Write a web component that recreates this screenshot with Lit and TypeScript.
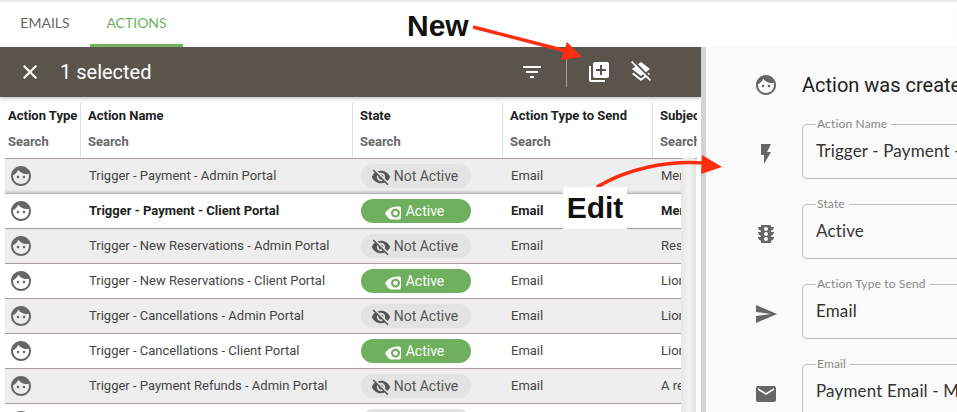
import { LitElement, html, css, svg } from "lit";
import { customElement } from "lit/decorators.js";

const P = {
  face: "M9 11.75c-.69 0-1.25.56-1.25 1.25s.56 1.25 1.25 1.25 1.25-.56 1.25-1.25-.56-1.25-1.25-1.25zm6 0c-.69 0-1.25.56-1.25 1.25s.56 1.25 1.25 1.25 1.25-.56 1.25-1.25-.56-1.25-1.25-1.25zM12 2C6.48 2 2 6.48 2 12s4.48 10 10 10 10-4.48 10-10S17.52 2 12 2zm0 18c-4.41 0-8-3.59-8-8 0-.29.02-.58.05-.86 2.36-1.05 4.23-2.98 5.21-5.37C11.07 8.33 14.05 10 17.42 10c.78 0 1.53-.09 2.25-.26.21.71.33 1.47.33 2.26 0 4.41-3.59 8-8 8z",
  flash: "M7 2v11h3v9l7-12h-4l4-8z",
  traffic: "M20 10h-3V8.86c1.72-.45 3-2 3-3.86h-3V4c0-.55-.45-1-1-1H8c-.55 0-1 .45-1 1v1H4c0 1.86 1.28 3.41 3 3.86V10H4c0 1.86 1.28 3.41 3 3.86V15H4c0 1.86 1.28 3.41 3 3.86V20c0 .55.45 1 1 1h8c.55 0 1-.45 1-1v-1.14c1.72-.45 3-2 3-3.86h-3v-1.14c1.72-.45 3-2 3-3.86zm-8 9c-1.11 0-2-.9-2-2s.89-2 2-2c1.1 0 2 .9 2 2s-.89 2-2 2zm0-5c-1.11 0-2-.9-2-2s.89-2 2-2c1.1 0 2 .9 2 2s-.89 2-2 2zm0-5c-1.11 0-2-.9-2-2 0-1.11.89-2 2-2 1.1 0 2 .89 2 2 0 1.1-.89 2-2 2z",
  send: "M2.01 21L23 12 2.01 3 2 10l15 2-15 2z",
  email: "M20 4H4c-1.1 0-1.99.9-1.99 2L2 18c0 1.1.9 2 2 2h16c1.1 0 2-.9 2-2V6c0-1.1-.9-2-2-2zm0 4l-8 5-8-5V6l8 5 8-5v2z",
  filter: "M10 18h4v-2h-4v2zM3 6v2h18V6H3zm3 7h12v-2H6v2z",
  close: "M19 6.41L17.59 5 12 10.59 6.41 5 5 6.41 10.59 12 5 17.59 6.41 19 12 13.41 17.59 19 19 17.59 13.41 12z",
  add: "M4 6H2v14c0 1.1.9 2 2 2h14v-2H4V6zm16-4H8c-1.1 0-2 .9-2 2v12c0 1.1.9 2 2 2h12c1.1 0 2-.9 2-2V4c0-1.1-.9-2-2-2zm-1 9h-4v4h-2v-4H9V9h4V5h2v4h4v2z",
  layersClear: "M19.81 14.99l1.19-.92-1.43-1.43-1.19.92 1.43 1.43zm-.45-4.72L21 9l-9-7-2.91 2.27 7.87 7.88 2.4-1.88zM3.27 1L2 2.27l4.22 4.22L3 9l1.63 1.27L12 16l2.1-1.63 1.43 1.43L12 18.54l-7.37-5.73L3 14.07l9 7 4.95-3.85L20.73 21 22 19.73 3.27 1z",
  eyeOff: "M12 7c2.76 0 5 2.24 5 5 0 .65-.13 1.26-.36 1.83l2.92 2.92c1.51-1.26 2.7-2.89 3.43-4.75-1.73-4.39-6-7.5-11-7.5-1.4 0-2.74.25-3.98.7l2.16 2.16C10.74 7.13 11.35 7 12 7zM2 4.27l2.28 2.28.46.46C3.08 8.3 1.78 10.02 1 12c1.73 4.39 6 7.5 11 7.5 1.55 0 3.03-.3 4.38-.84l.42.42L19.73 22 21 20.73 3.27 3 2 4.27zM7.53 9.8l1.55 1.55c-.05.21-.08.43-.08.65 0 1.66 1.34 3 3 3 .22 0 .44-.03.65-.08l1.55 1.55c-.67.33-1.41.53-2.2.53-2.76 0-5-2.24-5-5 0-.79.2-1.53.53-2.2zm4.31-.78l3.15 3.15.02-.16c0-1.66-1.34-3-3-3l-.17.01z",
};

const icon = (d: string, size: number, cls = "") =>
  html`<svg class=${cls} width=${size} height=${size} viewBox="0 0 24 24" fill="currentColor">${svg`<path d=${d}></path>`}</svg>`;

const eyeOn = html`<svg class="eyeon" width="16" height="14" viewBox="0 0 16 14" fill="currentColor" fill-rule="evenodd">${svg`<path d="M0 7.2C2.6 2.8 6.8.4 14 .4c1.2 0 2 .8 2 2v9.2c0 1.2-.8 2-2 2H7.4C4.2 13.6 2 11 0 7.2ZM10.5 2.6a4.5 4.5 0 1 0 .01 0ZM10.5 4.8a2.3 2.3 0 1 1-.01 0Z"></path>`}</svg>`;

type Row = { name: string; active: boolean; subject: string; selected?: boolean };
const rows: Row[] = [
  { name: "Trigger - Payment - Admin Portal", active: false, subject: "Mer" },
  { name: "Trigger - Payment - Client Portal", active: true, subject: "Mer", selected: true },
  { name: "Trigger - New Reservations - Admin Portal", active: false, subject: "Res" },
  { name: "Trigger - New Reservations - Client Portal", active: true, subject: "Lion" },
  { name: "Trigger - Cancellations - Admin Portal", active: false, subject: "Lion" },
  { name: "Trigger - Cancellations - Client Portal", active: true, subject: "Lion" },
  { name: "Trigger - Payment Refunds - Admin Portal", active: false, subject: "A re" },
  { name: "Trigger - Payment Refunds - Client Portal", active: false, subject: "A re" },
];
const heads = ["Action Type", "Action Name", "State", "Action Type to Send", "Subject"];
const fields = [
  { icon: P.flash, label: "Action Name", value: "Trigger - Payment - Client Portal" },
  { icon: P.traffic, label: "State", value: "Active" },
  { icon: P.send, label: "Action Type to Send", value: "Email" },
  { icon: P.email, label: "Email", value: "Payment Email - Merchant" },
];

@customElement("app-root")
export class AppRoot extends LitElement {
  static styles = css`
    :host { display: block; width: 957px; height: 412px; overflow: hidden; position: relative; background: #fff; font-family: Roboto, sans-serif; }
    * { box-sizing: border-box; }
    .page { display: flex; height: 412px; box-shadow: inset 0 3px 3px -2px #d8d8d8; }
    .left { width: 701px; flex: none; display: flex; flex-direction: column; overflow: hidden; }
    .tabs { height: 47px; flex: none; display: flex; font-family: Lato, sans-serif; font-size: 14px; color: #666; }
    .tab { display: flex; align-items: center; justify-content: center; padding-bottom: 2px; width: 93px; }
    .tab:first-child { width: 90px; }
    .tab.on { color: #6db25f; box-shadow: inset 0 -3px 0 #6db25f; }
    .bar { height: 50px; flex: none; background: #5a544c; color: #fff; display: flex; align-items: center; box-shadow: 0 2px 3px #ccc; position: relative; }
    .bar .x { margin-left: 18px; }
    .bar .title { margin-left: 18px; font-size: 20px; }
    .bar .tools { margin-left: auto; margin-right: 48px; display: flex; align-items: center; }
    .sep { width: 1px; height: 29px; background: #a5a19b; margin: 0 20px 0 22px; }
    .tools .last { margin-left: 18px; }
    .table { margin: 5px 4px 0 5px; flex: 1; min-height: 0; display: flex; flex-direction: column; overflow: hidden; }
    .grid { display: grid; grid-template-columns: 75px 272px 150px 150px 200px; }
    .head { height: 57px; flex: none; border-bottom: 1px solid #a89d99; color: #222; font-size: 13px; font-weight: 700; }
    .hcell { margin-bottom: 1px; padding-left: 7px; border-left: 1px solid #ddd; white-space: nowrap; overflow: hidden; display: flex; flex-direction: column; }
    .hcell:first-child { padding-left: 3px; border-left: 0; }
    .hcell span { height: 26px; line-height: 26px; }
    .hcell span:first-child { margin-top: 1px; }
    .hcell .s { color: #666; }
    .body { flex: 1; min-height: 0; display: flex; }
    .rows { width: 676px; flex: none; overflow: hidden; }
    .row { height: 35px; border-bottom: 1px solid #a89d99; background: #fff; color: #444; font-size: 13px; align-items: center; }
    .row.odd { background: #eee; }
    .row.sel { font-weight: 700; color: #222; box-shadow: 0 -2px 3px #bbb; position: relative; }
    .row > div { white-space: nowrap; }
    .face { color: #666; margin-left: 4px; display: block; }
    .name, .mail { padding: 0 0 2px 9px; }
    .pill { width: 110px; height: 24px; margin-left: 9px; border-radius: 12px; background: #e3e3e3; color: #555; display: flex; align-items: center; justify-content: center; gap: 4px; padding-right: 3px; font-size: 14px; font-weight: 400; }
    .pill.on { background: #6fb05f; color: #fff; gap: 5px; }
    .eyeon { transform: translateY(2px); }
    .eyeoff { transform: translateY(1px); margin-right: -1px; }
    .scroll { width: 15px; flex: none; background: linear-gradient(90deg, #e6e6e6, #f2f2f2 50%, #e2e2e2); border-radius: 5px 5px 0 0; margin-top: -2px; position: relative; }
    .gutter { width: 5px; flex: none; background: #d4d4d4; margin-top: 47px; }
    .right { flex: 1; margin-top: 47px; background: #fafafa; padding: 26px 0 0 48px; min-width: 0; overflow: hidden; display: flex; flex-direction: column; }
    .fline { display: flex; align-items: center; gap: 24px; flex: none; white-space: nowrap; }
    .fline .ic { color: #666; flex: none; display: block; }
    .fields .ic { margin-top: 10px; }
    .heading { height: 24px; font-size: 20px; color: #222; margin-bottom: 21px; }
    .fields { display: flex; flex-direction: column; gap: 19px; }
    fieldset { margin: 0; padding: 0 0 0 13px; width: 400px; height: 61px; border: 1px solid #bbb; border-radius: 5px; flex: none; font-family: Lato, sans-serif; }
    legend { padding: 0 4px 0 1px; font-size: 12px; line-height: 12px; color: #888; letter-spacing: .15px; }
    .val { font-size: 17px; letter-spacing: .15px; color: #333; line-height: 20px; margin-top: 11px; }
    .ann { position: absolute; font-family: "Liberation Sans", sans-serif; font-weight: 700; font-size: 30px; color: #111; line-height: 34px; }
    .new { left: 407px; top: 9px; }
    .edit { left: 563px; top: 187px; width: 64px; height: 42px; background: #fff; text-align: center; line-height: 42px; }
    .arrows { position: absolute; left: 0; top: 0; pointer-events: none; }
  `;

  render() {
    return html`
      <div class="page">
        <div class="left">
          <div class="tabs"><div class="tab">EMAILS</div><div class="tab on">ACTIONS</div></div>
          <div class="bar">
            ${icon(P.close, 24, "x")}
            <div class="title">1 selected</div>
            <div class="tools">
              ${icon(P.filter, 24)}
              <div class="sep"></div>
              ${icon(P.add, 24)}
              ${icon(P.layersClear, 24, "last")}
            </div>
          </div>
          <div class="table">
            <div class="grid head">
              ${heads.map((h) => html`<div class="hcell"><span>${h}</span><span class="s">Search</span></div>`)}
            </div>
            <div class="body">
              <div class="rows">
                ${rows.map((r, i) => html`
                  <div class="grid row ${i % 2 === 0 ? "odd" : ""} ${r.selected ? "sel" : ""}">
                    <div>${icon(P.face, 24, "face")}</div>
                    <div class="name">${r.name}</div>
                    <div>
                      <div class="pill ${r.active ? "on" : ""}">
                        ${r.active ? eyeOn : icon(P.eyeOff, 20, "eyeoff")}<span>${r.active ? "Active" : "Not Active"}</span>
                      </div>
                    </div>
                    <div class="mail">Email</div>
                    <div class="mail">${r.subject}</div>
                  </div>`)}
              </div>
              <div class="scroll"></div>
            </div>
          </div>
        </div>
        <div class="gutter"></div>
        <div class="right">
          <div class="fline heading">${icon(P.face, 24, "ic")}<span>Action was created on</span></div>
          <div class="fields">
            ${fields.map((f) => html`
              <div class="fline">
                ${icon(f.icon, 24, "ic")}
                <fieldset><legend>${f.label}</legend><div class="val">${f.value}</div></fieldset>
              </div>`)}
          </div>
        </div>
      </div>
      <div class="ann new">New</div>
      <svg class="arrows" width="957" height="412" viewBox="0 0 957 412">
        <path d="M473 27L566 51" stroke="#ff2d10" stroke-width="3.5" fill="none"></path>
        <path d="M582 57L567 42L561 60Z" fill="#ff2d10"></path>
        <path d="M597 187C625 170 665 160 704 163" stroke="#ff2d10" stroke-width="3.5" fill="none"></path>
        <path d="M722 167L702 155L701 174Z" fill="#ff2d10"></path>
      </svg>
      <div class="ann edit">Edit</div>
    `;
  }
}
